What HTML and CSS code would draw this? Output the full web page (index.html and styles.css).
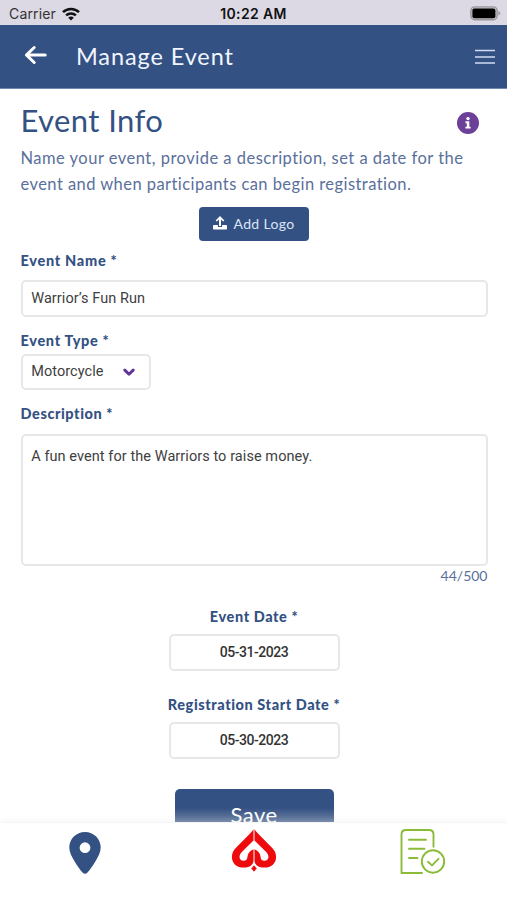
FILE: index.html
```html
<!DOCTYPE html>
<html lang="en">
<head>
<meta charset="utf-8">
<meta name="viewport" content="width=device-width, initial-scale=1">
<title>Manage Event</title>
<link rel="stylesheet" href="styles.css">
</head>
<body>
<div class="app">
  <div class="status">
    <div class="status-left"><span class="carrier">Carrier</span>
      <svg class="wifi" width="18" height="14" viewBox="0 0 18 14" fill="none" stroke="#111" stroke-width="2.5"><path d="M1 5.2C5.4.8 12.6.8 17 5.2M4.1 8.4c2.8-2.7 7-2.7 9.8 0"/><path d="M9 13.5 6.2 10.7c1.6-1.5 4-1.5 5.6 0z" fill="#111" stroke="none"/></svg>
    </div>
    <span class="clock">10:22 AM</span>
    <svg class="battery" width="31" height="15" viewBox="0 0 31 15"><rect x=".9" y=".9" width="26.2" height="12.8" rx="3.8" fill="#c5c2c8" stroke="#99969d" stroke-width="1.4"/><rect x="2.4" y="2.4" width="23" height="9.8" rx="2" fill="#000"/><path d="M28.4 5v4.6q1.8-.8 1.8-2.3T28.4 5z" fill="#99969d"/></svg>
  </div>
  <header class="bar">
    <svg class="back" width="24" height="20" viewBox="0 0 24 20" fill="none" stroke="#fff" stroke-width="3" stroke-linecap="round" stroke-linejoin="round"><path d="M21.2 10H3M10.2 2.5 2.4 10l7.8 7.5"/></svg>
    <span class="bar-title">Manage Event</span>
    <svg class="menu" width="20" height="16" viewBox="0 0 20 16" stroke="#cfdcf2" stroke-width="1.6"><path d="M0 1.5h20M0 8h20M0 14h20"/></svg>
  </header>
  <main class="content">
    <div class="heading">
      <h1>Event Info</h1>
      <svg class="info" width="22" height="22" viewBox="0 0 22 22"><circle cx="11" cy="11" r="11" fill="#6c4098"/><circle cx="11" cy="6.6" r="1.7" fill="#fff"/><path d="M8.5 9.3h3.8v5.4h1.3v1.9H8.4v-1.9h1.4v-3.5H8.5z" fill="#fff"/></svg>
    </div>
    <p class="intro"><span class="line-a">Name your event, provide a description, set a date for the</span><br><span class="line-b">event and when participants can begin registration.</span></p>
    <button class="logo-btn" type="button">
      <svg width="14" height="14" viewBox="0 0 14 14" fill="#fff"><path d="M7 0 2.6 4.4l1.2 1.1L6 3.500V10h2V3.500l2.200 2 1.200-1.100z"/><path d="M0 9.900Q0 9 .9 9h4v2h4.200V9h4q.9 0 .9.9v2.500q0 1.200-1.200 1.200H1.200Q0 13.600 0 12.400z"/></svg>
      <span>Add Logo</span>
    </button>
    <div class="label l-name"><span>Event Name *</span></div>
    <div class="field">Warrior’s Fun Run</div>
    <div class="label l-type"><span>Event Type *</span></div>
    <div class="field select"><span>Motorcycle</span>
      <svg width="12" height="9" viewBox="0 0 12 9" fill="none" stroke="#5f3597" stroke-width="2.9" stroke-linecap="round" stroke-linejoin="round"><path d="M1.8 2.1 6 6.2l4.2-4.1"/></svg>
    </div>
    <div class="label l-desc"><span>Description *</span></div>
    <div class="field area">A fun event for the Warriors to raise money.</div>
    <div class="count"><span>44/500</span></div>
    <div class="label l-date"><span>Event Date *</span></div>
    <div class="field date">05-31-2023</div>
    <div class="label l-reg"><span>Registration Start Date *</span></div>
    <div class="field date">05-30-2023</div>
    <button class="save" type="button">Save</button>
  </main>
  <nav class="tabs">
    <svg class="pin" width="32" height="42" viewBox="0 0 32 42"><path fill="#345183" fill-rule="evenodd" d="M16 0C7.1 0 .3 6.9.3 15.5c0 5 2.8 9.7 5.5 14.2 2.7 4.4 5.4 8.2 7.7 10.8q2.5 2.6 5 0c2.3-2.6 5-6.4 7.7-10.8 2.7-4.5 5.5-9.2 5.5-14.2C31.7 6.900 24.900 0 16 0zm0 10.300a5.400 5.400 0 1 1 0 10.800 5.400 5.400 0 0 1 0-10.800z"/></svg>
    <svg class="spade" width="46" height="44" viewBox="0 0 46 44"><g fill="#ed0b0e"><path d="M22.5.2V11.500L11.300 22.600C7.200 26.600 7.800 31.600 12.400 31.800C15.200 31.900 16.300 30.300 16.500 27.400C16.700 24.200 19 21.600 22.500 20.200V31.500C22.500 35.600 19 38.600 13 38.600C5.500 38.600.9 34 .9 27.900C.9 24 2.500 21.300 5 18.800L18.300 5.300C20 3.600 21.500 2 22.500.2z"/><path d="M23.500.2V11.500L34.700 22.600C38.800 26.600 38.200 31.600 33.600 31.800C30.800 31.900 29.700 30.300 29.500 27.400C29.300 24.200 27 21.600 23.500 20.200V31.500C23.500 35.600 27 38.600 33 38.600C40.500 38.600 45.100 34 45.100 27.900C45.100 24 43.500 21.300 41 18.800L27.700 5.300C26 3.600 24.500 2 23.500.2z"/></g><path fill="#ed0b0e" stroke="#fff" stroke-width=".7" d="m23 35.800 3 3.700-3 3.700-3-3.700z"/></svg>
    <svg class="doc" width="46" height="46" viewBox="0 0 46 46" fill="none" stroke="#8abc38" stroke-width="1.9" stroke-linecap="round" stroke-linejoin="round"><path d="M22 44H1.500V5.500Q1.500 1 6 1h23q4.500 0 4.500 4.500v12.200M9 10.800h17M9 19.700h15.500M9 29h8.500"/><circle cx="33" cy="32.500" r="11.200"/><path d="m28 32.800 4 3.600 6.500-6.600"/></svg>
  </nav>
</div>
</body>
</html>
```
FILE: styles.css
```css
* { box-sizing: border-box; }
body { margin: 0; background: #fff; color: #345183; font-family: Lato, "Liberation Sans", sans-serif; }
button { border: 0; padding: 0; font-family: inherit; }
svg { display: block; flex: none; }
.app { height: 900px; display: flex; flex-direction: column; overflow: hidden; }
.status { height: 25px; flex: none; background: #dcd8e4; display: grid; grid-template-columns: 1fr auto 1fr; align-items: center; padding: 2px 6px 0 9px; color: #111; font-family: Inter, sans-serif; font-size: 14px; }
.status-left { display: flex; align-items: center; gap: 6px; }
.carrier { color: #333; letter-spacing: .15px; }
.clock { font-weight: 600; letter-spacing: .35px; margin-left: -3px; }
.battery { justify-self: end; }
.bar { height: 64px; flex: none; background: #345183; border-bottom: 1px solid #7189ae; display: flex; align-items: center; padding: 0 12px 0 24px; }
.back { margin-top: -3px; }
.bar-title { flex: 1; margin: -2px 0 0 28px; color: #f1f5ff; font-size: 23.5px; letter-spacing: .9px; }
.content { flex: 1; min-height: 0; overflow: hidden; padding: 13px 19.5px 0 20.5px; display: flex; flex-direction: column; }
.content > * { flex: none; }
.heading { height: 43px; display: flex; justify-content: space-between; }
h1 { margin: 0; font-size: 31px; line-height: 37px; font-weight: 400; letter-spacing: .4px; }
.info { margin: 10px 8.5px 0 0; }
.intro { margin: 0; color: #5a709c; font-size: 16.5px; line-height: 26px; white-space: nowrap; letter-spacing: .49px; }
.line-b { letter-spacing: .44px; }
.logo-btn { align-self: center; margin-top: 10px; width: 110px; height: 34px; border-radius: 4px; background: #345183; color: #dce5f7; display: flex; align-items: center; justify-content: center; gap: 6px; font-size: 14px; letter-spacing: .35px; padding-bottom: 2px; }
.label { height: 20px; line-height: 20px; font-size: 14.5px; font-weight: 900; letter-spacing: .58px; white-space: nowrap; }
.l-name { margin: 10px 0 9px; letter-spacing: .7px; }
.l-type { margin: 14px 0 3px; letter-spacing: .66px; }
.l-desc { margin: 14px 0 10px; }
.l-date { margin: 21px 0 7px; text-align: center; }
.l-reg { margin: 24px 0 7px; text-align: center; }
.field { height: 37px; border: 2px solid #e7e7e9; border-radius: 5px; padding: 0 8.7px; font-family: Roboto, sans-serif; font-size: 14.5px; line-height: 34px; color: #404040; letter-spacing: .07px; }
.select { width: 130px; height: 36px; display: flex; align-items: center; justify-content: space-between; padding-right: 14px; }
.area { height: 132px; line-height: 20px; padding-top: 11px; }
.count { height: 20px; line-height: 20px; text-align: right; color: #5a709c; font-size: 14px; }
.date { align-self: center; width: 171px; text-align: center; font-size: 14px; font-weight: 500; letter-spacing: -.45px; line-height: 33px; color: #333; }
.save { align-self: center; margin-top: 30px; width: 159px; height: 50px; border-radius: 5px 5px 0 0; background: linear-gradient(#345183 0 19px, #506992 26px, #7c8fae 33px); color: #fff; font-size: 22px; letter-spacing: .5px; }
.tabs { height: 78px; flex: none; background: #fff; border-top: 1px solid #f5f5f5; box-shadow: 0 -2px 8px rgba(0,0,0,.03); display: grid; grid-template-columns: repeat(3, 1fr); justify-items: center; align-items: start; }
.pin { margin-top: 9px; }
.spade { margin-top: 6px; }
.doc { margin-top: 6px; }
```
